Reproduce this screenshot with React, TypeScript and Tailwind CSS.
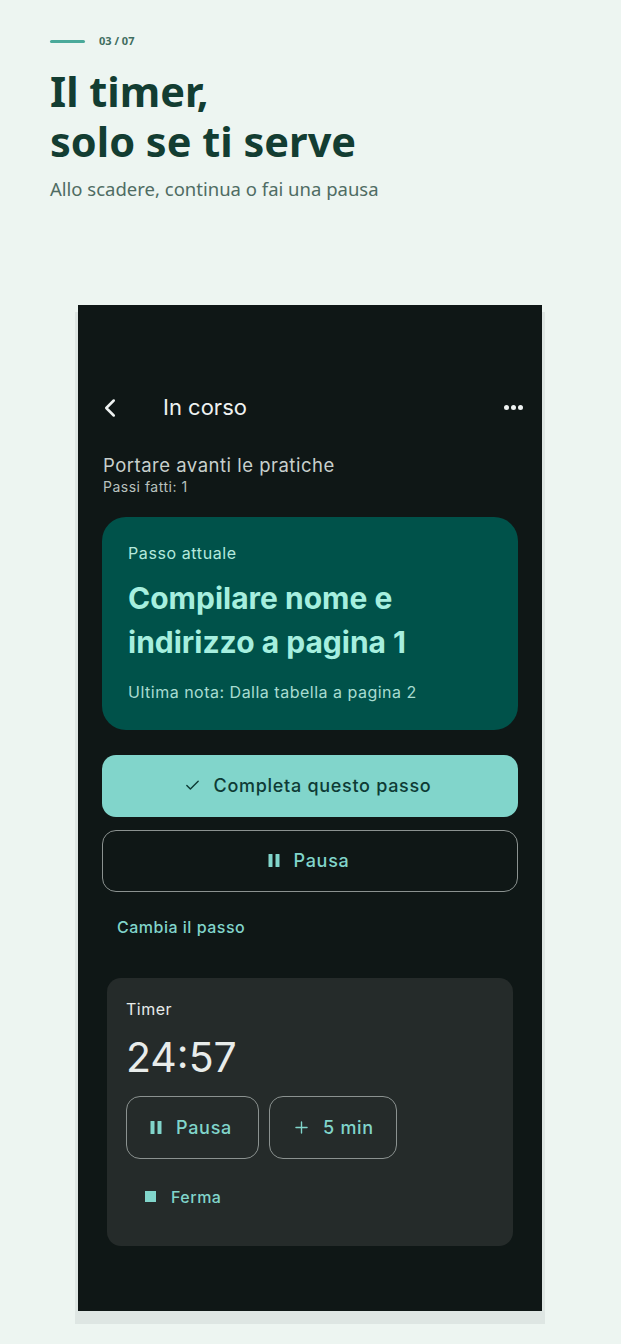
import { Check, ChevronLeft, Plus } from 'lucide-react';

function PauseIcon({ className }: { className?: string }) {
  return (
    <svg viewBox="0 0 12 13" className={className} fill="currentColor">
      <rect x="0.5" y="0" width="4" height="13" rx="0.5" />
      <rect x="7.5" y="0" width="4" height="13" rx="0.5" />
    </svg>
  );
}

export default function App() {
  return (
    <div className="min-h-[1344px] w-[621px] bg-[#edf5f1] font-['Inter','Noto_Sans',sans-serif]">
      {/* Intro */}
      <div className="px-[50px] pt-[33px]">
        <div className="flex items-center gap-[14px]">
          <div className="h-[3px] w-[35px] rounded-full bg-[#4aa99a]" />
          <span className="font-['Noto_Sans',sans-serif] text-[11px] font-bold text-[#3f6d5f]">03 / 07</span>
        </div>
        <h1 className="mt-[16px] font-['Noto_Sans',sans-serif] text-[41.5px] font-bold leading-[50px] text-[#133d32]">
          Il timer,
          <br />
          solo se ti serve
        </h1>
        <p className="mt-[10px] font-['Noto_Sans',sans-serif] text-[18.5px] leading-[25px] text-[#4f6c63]">
          Allo scadere, continua o fai una pausa
        </p>
      </div>

      {/* Phone */}
      <div className="ml-[78px] mt-[104px] w-[464px] bg-[#0f1716] px-[24px] pb-[65px] pt-[79px] shadow-[0_10px_0_3px_#dee6e3]">
        <div className="flex h-[48px] items-center">
          <ChevronLeft size={30} strokeWidth={2} className="-ml-[7px] text-[#eef2f1]" />
          <span className="ml-[38px] text-[22px] font-normal text-[#eef2f1]">In corso</span>
          <div className="ml-auto mr-[-5px] flex gap-[2px]">
            <span className="h-[5px] w-[5px] rounded-full bg-[#eef2f1]" />
            <span className="h-[5px] w-[5px] rounded-full bg-[#eef2f1]" />
            <span className="h-[5px] w-[5px] rounded-full bg-[#eef2f1]" />
          </div>
        </div>

        <div className="mt-[21px] px-[1px]">
          <p className="text-[18.5px] leading-[24px] tracking-[0.5px] text-[#c8d0cd]">Portare avanti le pratiche</p>
          <p className="text-[14px] leading-[20px] tracking-[0.5px] text-[#b9c2bf]">Passi fatti: 1</p>
        </div>

        <div className="mt-[20px] rounded-[24px] bg-[#00524a] px-[26px] pb-[27px] pt-[25px]">
          <p className="text-[16px] leading-[22px] tracking-[0.6px] text-[#b4e9dd]">Passo attuale</p>
          <h2 className="mt-[12px] text-[30px] font-bold leading-[44px] text-[#a6efdf]">
            Compilare nome e
            <br />
            indirizzo a pagina 1
          </h2>
          <p className="mt-[17px] text-[16px] leading-[22px] tracking-[0.5px] text-[#a8dcd1]">
            Ultima nota: Dalla tabella a pagina 2
          </p>
        </div>

        <button className="mt-[25px] flex h-[62px] w-full items-center justify-center gap-[13px] rounded-[14px] bg-[#81d5cb] pr-[5px] text-[18px] font-medium tracking-[0.7px] text-[#0e3b35]">
          <Check size={17} strokeWidth={2} />
          Completa questo passo
        </button>

        <button className="mt-[13px] flex h-[62px] w-full items-center justify-center gap-[14px] rounded-[14px] border border-[#8b9290] pr-[3px] text-[18px] font-medium tracking-[0.7px] text-[#81d5cb]">
          <PauseIcon className="h-[13px] w-[12px]" />
          Pausa
        </button>

        <button className="ml-[15px] mt-[23px] text-[16px] font-medium tracking-[0.5px] text-[#81d5cb]">
          Cambia il passo
        </button>

        <div className="mx-[5px] mt-[39px] rounded-[14px] bg-[#252b2a] px-[19px] pb-[37px] pt-[20px]">
          <p className="text-[16px] leading-[22px] tracking-[0.5px] text-[#e8ecea]">Timer</p>
          <p className="mt-[13px] text-[41px] font-normal leading-[48px] text-[#e8ecea]">24:57</p>
          <div className="mt-[15px] flex gap-[10px]">
            <button className="flex h-[63px] w-[133px] items-center justify-center gap-[14px] rounded-[14px] border border-[#8b9290] pr-[3px] text-[18px] font-medium tracking-[0.7px] text-[#81d5cb]">
              <PauseIcon className="h-[13px] w-[12px]" />
              Pausa
            </button>
            <button className="flex h-[63px] w-[128px] items-center justify-center gap-[12px] rounded-[14px] border border-[#8b9290] text-[18px] font-medium tracking-[0.7px] text-[#81d5cb]">
              <Plus size={19} strokeWidth={1.75} />
              5 min
            </button>
          </div>
          <button className="ml-[19px] mt-[26px] flex items-center gap-[15px] text-[16px] font-medium tracking-[0.5px] text-[#81d5cb]">
            <span className="h-[11px] w-[11px] bg-[#81d5cb]" />
            Ferma
          </button>
        </div>
      </div>
    </div>
  );
}
